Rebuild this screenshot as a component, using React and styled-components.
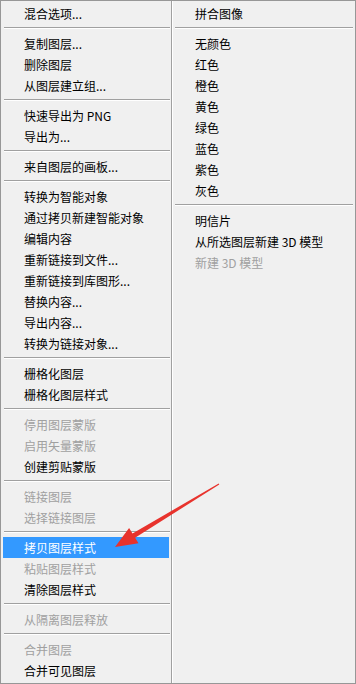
import React from "react";
import styled, { createGlobalStyle } from "styled-components";

const Global = createGlobalStyle`
  html, body { margin: 0; padding: 0; background: #f0f0f0; }
  body { font-family: "Noto Sans CJK SC", "Noto Sans", sans-serif; }
`;

const Menu = styled.div`
  position: relative;
  box-sizing: border-box;
  width: 356px;
  height: 684px;
  background: #f0f0f0;
  border: 1px solid #979797;
  display: grid;
  grid-template-columns: 170px 2px 182px;
  font-family: "Noto Sans CJK SC", "Noto Sans", sans-serif;
  font-size: 12px;
  overflow: hidden;
`;

const Column = styled.div`
  display: flex;
  flex-direction: column;
  padding: 2px 0;
`;

const Divider = styled.div`
  border-left: 1px solid #a0a0a0;
  background: #ffffff;
  width: 1px;
`;

const Item = styled.div`
  height: 21px;
  line-height: 21px;
  margin: ${(p) => (p.$side === "left" ? "0 2px 0 2px" : "0 2px")};
  padding-left: ${(p) => (p.$side === "left" ? "21px" : "20px")};
  white-space: nowrap;
  color: ${(p) => (p.$active ? "#ffffff" : p.$disabled ? "#a0a0a0" : "#000000")};
  background: ${(p) => (p.$active ? "#3399ff" : "transparent")};
`;

const Sep = styled.div`
  height: 1px;
  margin: 3px ${(p) => (p.$side === "left" ? "1px 4px 3px" : "2px 4px 2px")};
  background: #a0a0a0;
  border-bottom: 1px solid #ffffff;
`;

const Arrow = styled.svg`
  position: absolute;
  left: 100px;
  top: 470px;
  width: 130px;
  height: 90px;
  pointer-events: none;
`;

const S = "sep";

const left = [
  { t: "混合选项..." },
  S,
  { t: "复制图层..." },
  { t: "删除图层" },
  { t: "从图层建立组..." },
  S,
  { t: "快速导出为 PNG" },
  { t: "导出为..." },
  S,
  { t: "来自图层的画板..." },
  S,
  { t: "转换为智能对象" },
  { t: "通过拷贝新建智能对象" },
  { t: "编辑内容" },
  { t: "重新链接到文件..." },
  { t: "重新链接到库图形..." },
  { t: "替换内容..." },
  { t: "导出内容..." },
  { t: "转换为链接对象..." },
  S,
  { t: "栅格化图层" },
  { t: "栅格化图层样式" },
  S,
  { t: "停用图层蒙版", d: true },
  { t: "启用矢量蒙版", d: true },
  { t: "创建剪贴蒙版" },
  S,
  { t: "链接图层", d: true },
  { t: "选择链接图层", d: true },
  S,
  { t: "拷贝图层样式", a: true },
  { t: "粘贴图层样式", d: true },
  { t: "清除图层样式" },
  S,
  { t: "从隔离图层释放", d: true },
  S,
  { t: "合并图层", d: true },
  { t: "合并可见图层" },
];

const right = [
  { t: "拼合图像" },
  S,
  { t: "无颜色" },
  { t: "红色" },
  { t: "橙色" },
  { t: "黄色" },
  { t: "绿色" },
  { t: "蓝色" },
  { t: "紫色" },
  { t: "灰色" },
  S,
  { t: "明信片" },
  { t: "从所选图层新建 3D 模型" },
  { t: "新建 3D 模型", d: true },
];

function renderList(list, side) {
  return list.map((it, i) =>
    it === S ? (
      <Sep key={i} $side={side} />
    ) : (
      <Item key={i} $side={side} $disabled={it.d} $active={it.a}>
        {it.t}
      </Item>
    )
  );
}

export default function App() {
  return (
    <>
      <Global />
      <Menu>
        <Column>{renderList(left, "left")}</Column>
        <Divider />
        <Column>{renderList(right, "right")}</Column>
        <Arrow viewBox="0 0 130 90">
          <polygon
            points="14,76 37.5,72.3 34.1,66.7 118.3,13.5 117.7,12.5 31.5,62.5 28.1,56.9"
            fill="#e8332d"
          />
        </Arrow>
      </Menu>
    </>
  );
}
